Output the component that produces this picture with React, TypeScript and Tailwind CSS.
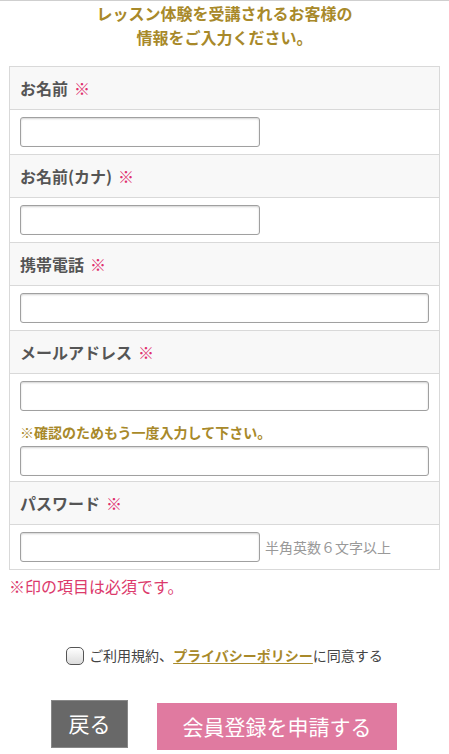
import React from "react";

const font = { fontFamily: '"Noto Sans CJK JP", "Noto Sans", sans-serif' };

function Label({ children }: { children: React.ReactNode }) {
  return (
    <div className="h-[43px] bg-[#f8f8f8] border-b border-[#d9d9d9] flex items-center px-[10px]">
      <span className="text-[16px] font-bold text-[#555]">{children}</span>
      <span className="ml-[6px] text-[16px] text-[#e0306e]">※</span>
    </div>
  );
}

function Field({ wide = true }: { wide?: boolean }) {
  return (
    <input
      type="text"
      className={
        "h-[30px] bg-white border border-[#a0a0a0] rounded-[3px] shadow-[inset_0_1px_2px_rgba(0,0,0,0.18)] outline-none " +
        (wide ? "w-full" : "w-[240px]")
      }
    />
  );
}

export default function App() {
  return (
    <div style={font} className="w-[449px] h-[754px] bg-white border-t border-[#cfcfcf] overflow-hidden">
      <h1 className="text-center text-[16px] font-bold text-[#a8892a] leading-[24px]">
        レッスン体験を受講されるお客様の
        <br />
        情報をご入力ください。
      </h1>

      <div className="mx-[9px] mt-[17px] border border-[#d9d9d9]">
        <Label>お名前</Label>
        <div className="border-b border-[#d9d9d9] px-[10px] py-[7px]">
          <Field wide={false} />
        </div>

        <Label>お名前(カナ)</Label>
        <div className="border-b border-[#d9d9d9] px-[10px] py-[7px]">
          <Field wide={false} />
        </div>

        <Label>携帯電話</Label>
        <div className="border-b border-[#d9d9d9] px-[10px] py-[7px]">
          <Field />
        </div>

        <Label>メールアドレス</Label>
        <div className="border-b border-[#d9d9d9] px-[10px] pt-[7px] pb-[5px]">
          <Field />
          <p className="text-[14px] font-bold text-[#a8892a] leading-[20px] mt-[11px] mb-[4px]">
            ※確認のためもう一度入力して下さい。
          </p>
          <Field />
        </div>

        <Label>パスワード</Label>
        <div className="px-[10px] py-[7px] flex items-center">
          <Field wide={false} />
          <span className="ml-[5px] text-[14px] text-[#999]">半角英数６文字以上</span>
        </div>
      </div>

      <p className="ml-[9px] mt-[4px] text-[16px] text-[#dc3a6c] leading-[24px]">
        ※印の項目は必須です。
      </p>

      <div className="mt-[47px] flex items-center justify-center text-[14px] text-[#444]">
        <span className="w-[18px] h-[18px] rounded-[5px] border border-[#555] bg-gradient-to-b from-white to-[#dcdcdc] mr-[5px]" />
        <span>ご利用規約、</span>
        <span className="font-bold text-[#a8892a] underline underline-offset-2">プライバシーポリシー</span>
        <span>に同意する</span>
      </div>

      <div className="mt-[34px] flex items-start">
        <button className="ml-[51px] w-[77px] h-[48px] bg-[#686868] border border-[#888] text-white text-[21px]">
          戻る
        </button>
        <button className="ml-[29px] mt-[3px] w-[240px] h-[47px] bg-[#e07aa0] text-white text-[21px]">
          会員登録を申請する
        </button>
      </div>
    </div>
  );
}
